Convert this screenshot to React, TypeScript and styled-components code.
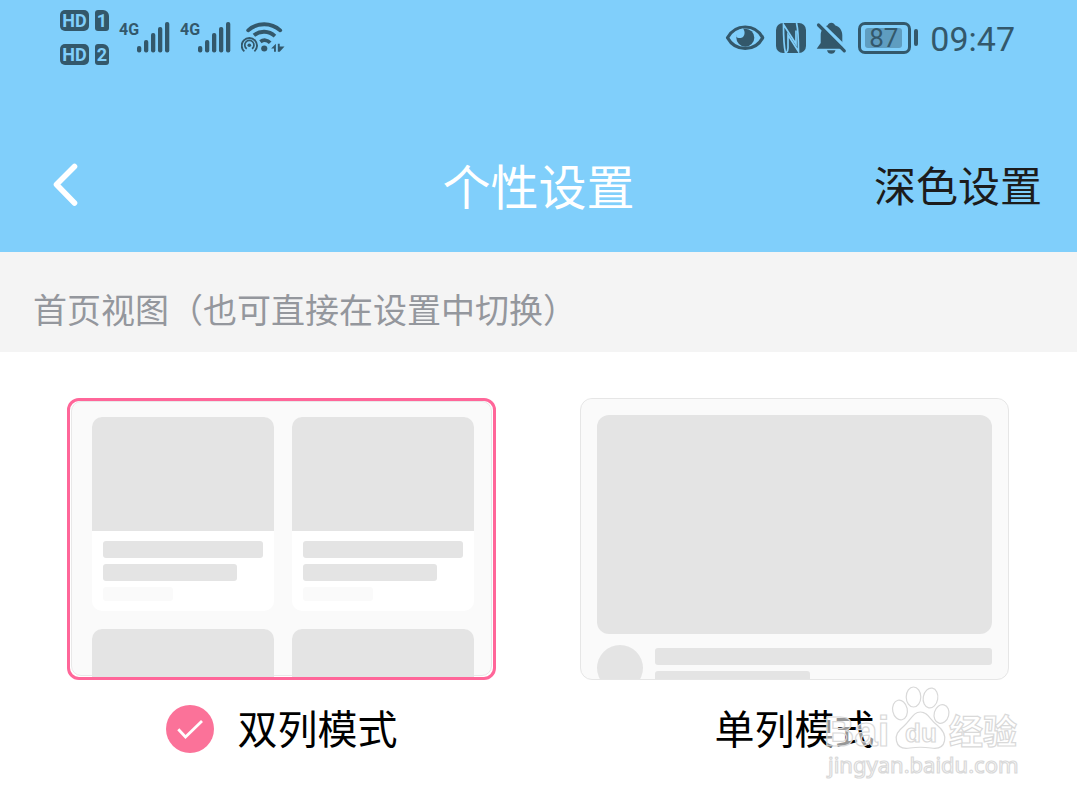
import React, { useState } from "react";
import styled, { createGlobalStyle } from "styled-components";

const sky = "#80cffb";
const slate = "#33586b";
const bone = "#e4e4e4";

const GlobalStyle = createGlobalStyle`
  *, *::before, *::after { box-sizing: border-box; }
  body {
    margin: 0;
    background: #fff;
    color: #000;
    font-family: "Noto Sans CJK SC", "Noto Sans", sans-serif;
  }
`;

const Page = styled.div`
  min-height: 100vh;
  background: #fff;
`;

const TopArea = styled.header`
  background: ${sky};
`;

const StatusBar = styled.div`
  display: flex;
  justify-content: space-between;
  align-items: flex-start;
  height: 120px;
  padding: 10px 62px 0 60px;
  color: ${slate};
  font-family: Roboto, sans-serif;
`;

const StatusGroup = styled.div`
  display: flex;
  align-items: center;
  gap: 10px;
  height: 55px;
`;

const SimStack = styled.div`
  display: flex;
  flex-direction: column;
  gap: 13px;
`;

const SimRow = styled.div`
  display: flex;
  gap: 6px;
`;

const SimBadge = styled.span<{ $small?: boolean }>`
  width: ${(p) => (p.$small ? 14 : 29)}px;
  height: 21px;
  border-radius: ${(p) => (p.$small ? "3px 6px 3px 3px" : "5px")};
  background: ${slate};
  color: ${sky};
  font-size: 18px;
  font-weight: 700;
  line-height: 21px;
  text-align: center;
`;

const Signal = styled.div`
  display: flex;
  align-items: flex-start;
  height: 32px;
`;

const Network = styled.span`
  width: 18px;
  font-size: 16px;
  font-weight: 700;
  line-height: 16px;
`;

const Battery = styled.div`
  display: flex;
  align-items: center;
  gap: 3px;
`;

const BatteryBody = styled.span`
  width: 53px;
  height: 32px;
  padding: 3px 4px;
  border: 3px solid ${slate};
  border-radius: 7px;
`;

const BatteryFill = styled.span`
  display: block;
  width: 37px;
  height: 20px;
  border-radius: 3px;
  background: #5f9dc0;
  font-size: 26px;
  line-height: 20px;
  text-align: center;
`;

const BatteryTip = styled.span`
  width: 4px;
  height: 17px;
  border-radius: 2px;
  background: ${slate};
`;

const Clock = styled.time`
  padding: 3px 0 0 2px;
  font-size: 34px;
  line-height: 40px;
`;

const NavBar = styled.nav`
  display: grid;
  grid-template-columns: 1fr auto 1fr;
  align-items: center;
  height: 132px;
  padding: 0 35px 5px;
`;

const BackButton = styled.button`
  justify-self: start;
  display: flex;
  padding: 3px 12px 0;
  border: 0;
  background: none;
  cursor: pointer;
`;

const Title = styled.h1`
  margin: 0;
  color: #fff;
  font-size: 48px;
  font-weight: 400;
  line-height: 72px;
`;

const DarkButton = styled.button`
  justify-self: end;
  padding: 0;
  border: 0;
  background: none;
  color: #1c1c1c;
  font: inherit;
  font-size: 42px;
  line-height: 64px;
  cursor: pointer;
`;

const SectionTitle = styled.h2`
  margin: 0;
  padding: 31px 33px 17px;
  background: #f4f4f4;
  color: #94979d;
  font-size: 34px;
  font-weight: 400;
  line-height: 52px;
`;

const Main = styled.main`
  position: relative;
`;

const Options = styled.fieldset`
  display: grid;
  grid-template-columns: 1fr 1fr;
  gap: 84px;
  margin: 0;
  padding: 46px 68px 49px 67px;
  border: 0;
`;

const Option = styled.label`
  min-width: 0;
  cursor: pointer;
`;

const Preview = styled.div<{ $selected: boolean }>`
  position: relative;
  height: 282px;
  overflow: hidden;
  border: ${(p) => (p.$selected ? "3px solid #ff6699" : "1px solid #e6e6e6")};
  border-radius: 12px;
  background: ${(p) => (p.$selected ? "#fff" : "#fafafa")};
`;

const Frame = styled.div<{ $selected: boolean }>`
  position: absolute;
  inset: 0 1px 1px;
  border: ${(p) => (p.$selected ? "1px solid #e8e8e8" : "0")};
  border-radius: 10px;
  background: #fafafa;
`;

const TileGrid = styled.div`
  position: relative;
  display: grid;
  grid-template-columns: 1fr 1fr;
  gap: 18px;
  padding: 16px 19px 0 22px;
`;

const Tile = styled.div`
  height: 194px;
  overflow: hidden;
  border-radius: 10px;
  background: #fff;
`;

const TileImage = styled.div`
  height: 114px;
  background: ${bone};
`;

const TileLines = styled.div`
  display: flex;
  flex-direction: column;
  gap: 6px;
  padding: 10px 11px;
`;

const Line = styled.div<{ $width: string; $faint?: boolean }>`
  width: ${(p) => p.$width};
  height: ${(p) => (p.$faint ? 14 : 17)}px;
  border-radius: 3px;
  background: ${(p) => (p.$faint ? "#fafafa" : bone)};
`;

const SingleColumn = styled.div`
  position: relative;
  padding: 16px;
`;

const WideImage = styled.div`
  height: 219px;
  border-radius: 12px;
  background: ${bone};
`;

const AuthorRow = styled.div`
  display: flex;
  gap: 12px;
  padding-top: 11px;
`;

const Avatar = styled.div`
  flex: none;
  width: 46px;
  height: 46px;
  border-radius: 50%;
  background: ${bone};
`;

const AuthorLines = styled.div`
  flex: 1;
  display: flex;
  flex-direction: column;
  gap: 6px;
  padding-top: 3px;
`;

const Caption = styled.span`
  display: flex;
  justify-content: center;
  align-items: flex-start;
  gap: 24px;
  height: 48px;
  margin-top: 25px;
  font-size: 40px;
  line-height: 44px;
`;

const HiddenRadio = styled.input`
  position: absolute;
  width: 1px;
  height: 1px;
  margin: 0;
  opacity: 0;
`;

const Watermark = styled.div`
  position: absolute;
  top: 332px;
  right: 48px;
  pointer-events: none;
`;

function EyeIcon() {
  return (
    <svg width="42" height="34" viewBox="0 0 42 34" fill="none" aria-hidden="true">
      <path d="M3.5 16.7C7.5 9.5 13.5 6 21.2 6s13.700 3.500 17.500 10.700c-3.800 7.200-9.800 10.700-17.500 10.700S7.500 23.900 3.500 16.700Z" stroke={slate} strokeWidth="3.200" strokeLinejoin="round" />
      <circle cx="21.300" cy="16.700" r="9" fill={slate} />
      <path d="M19 7.500c2.500 3 2 8-1.500 9.300-2.200.8-4.500 0-5.300-1.300C12.500 11 15 8 19 7.500Z" fill={sky} />
    </svg>
  );
}

function NfcIcon() {
  return (
    <svg width="30" height="30" viewBox="0 0 30 30" fill="none" aria-hidden="true">
      <rect width="30" height="30" rx="7" fill={slate} />
      <path d="M9.500 30C7.500 22 7.500 10 7.500 1.500L20 21V7.500" stroke={sky} strokeWidth="1.700" />
      <path d="M20.500 0C22.500 8 22.500 20 22.500 28.500L12 12V25C12 27.500 11.500 29 9.500 30" stroke={sky} strokeWidth="1.700" />
    </svg>
  );
}

function MutedBellIcon() {
  return (
    <svg width="32" height="34" viewBox="2 0 32 34" fill="none" aria-hidden="true">
      <path d="M17.300 1.700c1.800 0 3.200 1 3.700 2.500 4.800 1.600 7.300 5.200 7.300 10V22l1.200 5.700H2.700L6.700 22v-7.800c0-4.800 2.400-8.400 7-10 .5-1.500 1.800-2.500 3.600-2.500Z" fill={slate} />
      <path d="M13 29.200h8.500c-.6 2.400-2 3.600-4.200 3.600s-3.700-1.200-4.300-3.600Z" fill={slate} />
      <path d="M5 .500L34 29" stroke={sky} strokeWidth="3.400" />
      <path d="M4.500 4L30.300 29.800" stroke={slate} strokeWidth="3.200" strokeLinecap="round" />
    </svg>
  );
}

function WifiIcon() {
  return (
    <svg width="44" height="39" viewBox="3 0 46 39" fill="none" stroke={slate} aria-hidden="true">
      <path d="M10.500 12C20 3.500 34.500 3.500 44 12" strokeWidth="4" strokeLinecap="round" />
      <path d="M16.500 17.200C23 12 32 12.300 38.500 18" strokeWidth="4" />
      <path d="M23.300 24C26.500 21.500 30.500 22 33.500 25" strokeWidth="4" />
      <circle cx="27.300" cy="31" r="3.200" fill={slate} stroke="none" />
      <path d="M6.500 34A8 8 0 1 1 17 34" strokeWidth="2" />
      <path d="M9 31.300A4.800 4.800 0 1 1 14.500 31.300" strokeWidth="1.800" />
      <circle cx="11.700" cy="27.600" r="1.900" fill={slate} stroke="none" />
      <path d="M34.500 31L39.500 26V34.500H37.500V31ZM41.500 26H43.500V29H48.500L43.500 34.500H41.500Z" fill={slate} stroke="none" />
    </svg>
  );
}

function SignalBars() {
  const tops = [24, 18, 11, 5, 0];
  return (
    <svg width="33" height="31" viewBox="0 0 33 31" aria-hidden="true">
      {tops.map((top, i) => (
        <rect key={top} x={i * 7} y={top} width="4.300" height={30.500 - top} rx="2" fill={slate} />
      ))}
    </svg>
  );
}

function CheckIcon() {
  return (
    <svg width="48" height="48" viewBox="0 0 48 48" fill="none" aria-hidden="true">
      <circle cx="24" cy="24" r="24" fill="#fb7299" />
      <path d="M12.300 24.200L19.500 32L36 16" stroke="#fff" strokeWidth="2.800" />
    </svg>
  );
}

function BaiduMark() {
  return (
    <svg width="205" height="98" viewBox="0 0 205 98" fill="#fff" fillOpacity="0.600" stroke="#d9d9d9" strokeWidth="1.200" role="img" aria-label="Baidu 经验">
      <text x="0" y="62" fontFamily="Liberation Sans, sans-serif" fontWeight="700" fontSize="42">Bai</text>
      <ellipse cx="76" cy="26" rx="7.300" ry="10" transform="rotate(-12 76 26)" />
      <ellipse cx="89.500" cy="13" rx="7.300" ry="10" />
      <ellipse cx="106.500" cy="14" rx="7.300" ry="10" transform="rotate(10 106.500 14)" />
      <ellipse cx="117.500" cy="30" rx="7.300" ry="9.500" transform="rotate(15 117.500 30)" />
      <path d="M96.500 28C89 28 87 36 80 42C74 47 71 51 72.500 57C74 64 80 65 86 64C93 63 100 63 107 64C113 65 119 64 120.500 57C122 51 119 46 113 41C106 36 104 28 96.500 28Z" />
      <text x="81" y="58" fontFamily="Liberation Sans, sans-serif" fontWeight="700" fontSize="26">du</text>
      <text x="125" y="60" fontFamily="Noto Sans CJK SC, sans-serif" fontWeight="700" fontSize="34">经验</text>
      <text x="4" y="89" fontFamily="Noto Sans, sans-serif" fontSize="22">jingyan.baidu.com</text>
    </svg>
  );
}

function DoubleColumnArt() {
  return (
    <TileGrid>
      {[0, 1, 2, 3].map((n) => (
        <Tile key={n}>
          <TileImage />
          <TileLines>
            <Line $width="100%" />
            <Line $width="84%" />
            <Line $width="44%" $faint />
          </TileLines>
        </Tile>
      ))}
    </TileGrid>
  );
}

function SingleColumnArt() {
  return (
    <SingleColumn>
      <WideImage />
      <AuthorRow>
        <Avatar />
        <AuthorLines>
          <Line $width="100%" />
          <Line $width="46%" />
        </AuthorLines>
      </AuthorRow>
    </SingleColumn>
  );
}

const modes = [
  { id: "double", name: "双列模式", Art: DoubleColumnArt },
  { id: "single", name: "单列模式", Art: SingleColumnArt },
];

export default function App() {
  const [mode, setMode] = useState("double");

  return (
    <Page>
      <GlobalStyle />
      <TopArea>
        <StatusBar>
          <StatusGroup>
            <SimStack>
              {["1", "2"].map((slot) => (
                <SimRow key={slot}>
                  <SimBadge>HD</SimBadge>
                  <SimBadge $small>{slot}</SimBadge>
                </SimRow>
              ))}
            </SimStack>
            <Signal>
              <Network>4G</Network>
              <SignalBars />
            </Signal>
            <Signal>
              <Network>4G</Network>
              <SignalBars />
            </Signal>
            <WifiIcon />
          </StatusGroup>
          <StatusGroup>
            <EyeIcon />
            <NfcIcon />
            <MutedBellIcon />
            <Battery>
              <BatteryBody>
                <BatteryFill>87</BatteryFill>
              </BatteryBody>
              <BatteryTip />
            </Battery>
            <Clock>09:47</Clock>
          </StatusGroup>
        </StatusBar>
        <NavBar>
          <BackButton type="button" aria-label="返回">
            <svg width="36" height="48" viewBox="0 0 36 48" fill="none" aria-hidden="true">
              <path d="M27.500 5.500L9.500 23.500L27.500 42" stroke="#fff" strokeWidth="5.600" strokeLinecap="round" strokeLinejoin="round" />
            </svg>
          </BackButton>
          <Title>个性设置</Title>
          <DarkButton type="button">深色设置</DarkButton>
        </NavBar>
      </TopArea>
      <SectionTitle>首页视图（也可直接在设置中切换）</SectionTitle>
      <Main>
        <Options aria-label="首页视图">
          {modes.map(({ id, name, Art }) => (
            <Option key={id}>
              <Preview $selected={mode === id}>
                <Frame $selected={mode === id} />
                <Art />
              </Preview>
              <Caption>
                <HiddenRadio type="radio" name="home-view" value={id} checked={mode === id} onChange={() => setMode(id)} />
                {mode === id && <CheckIcon />}
                {name}
              </Caption>
            </Option>
          ))}
        </Options>
        <Watermark>
          <BaiduMark />
        </Watermark>
      </Main>
    </Page>
  );
}
